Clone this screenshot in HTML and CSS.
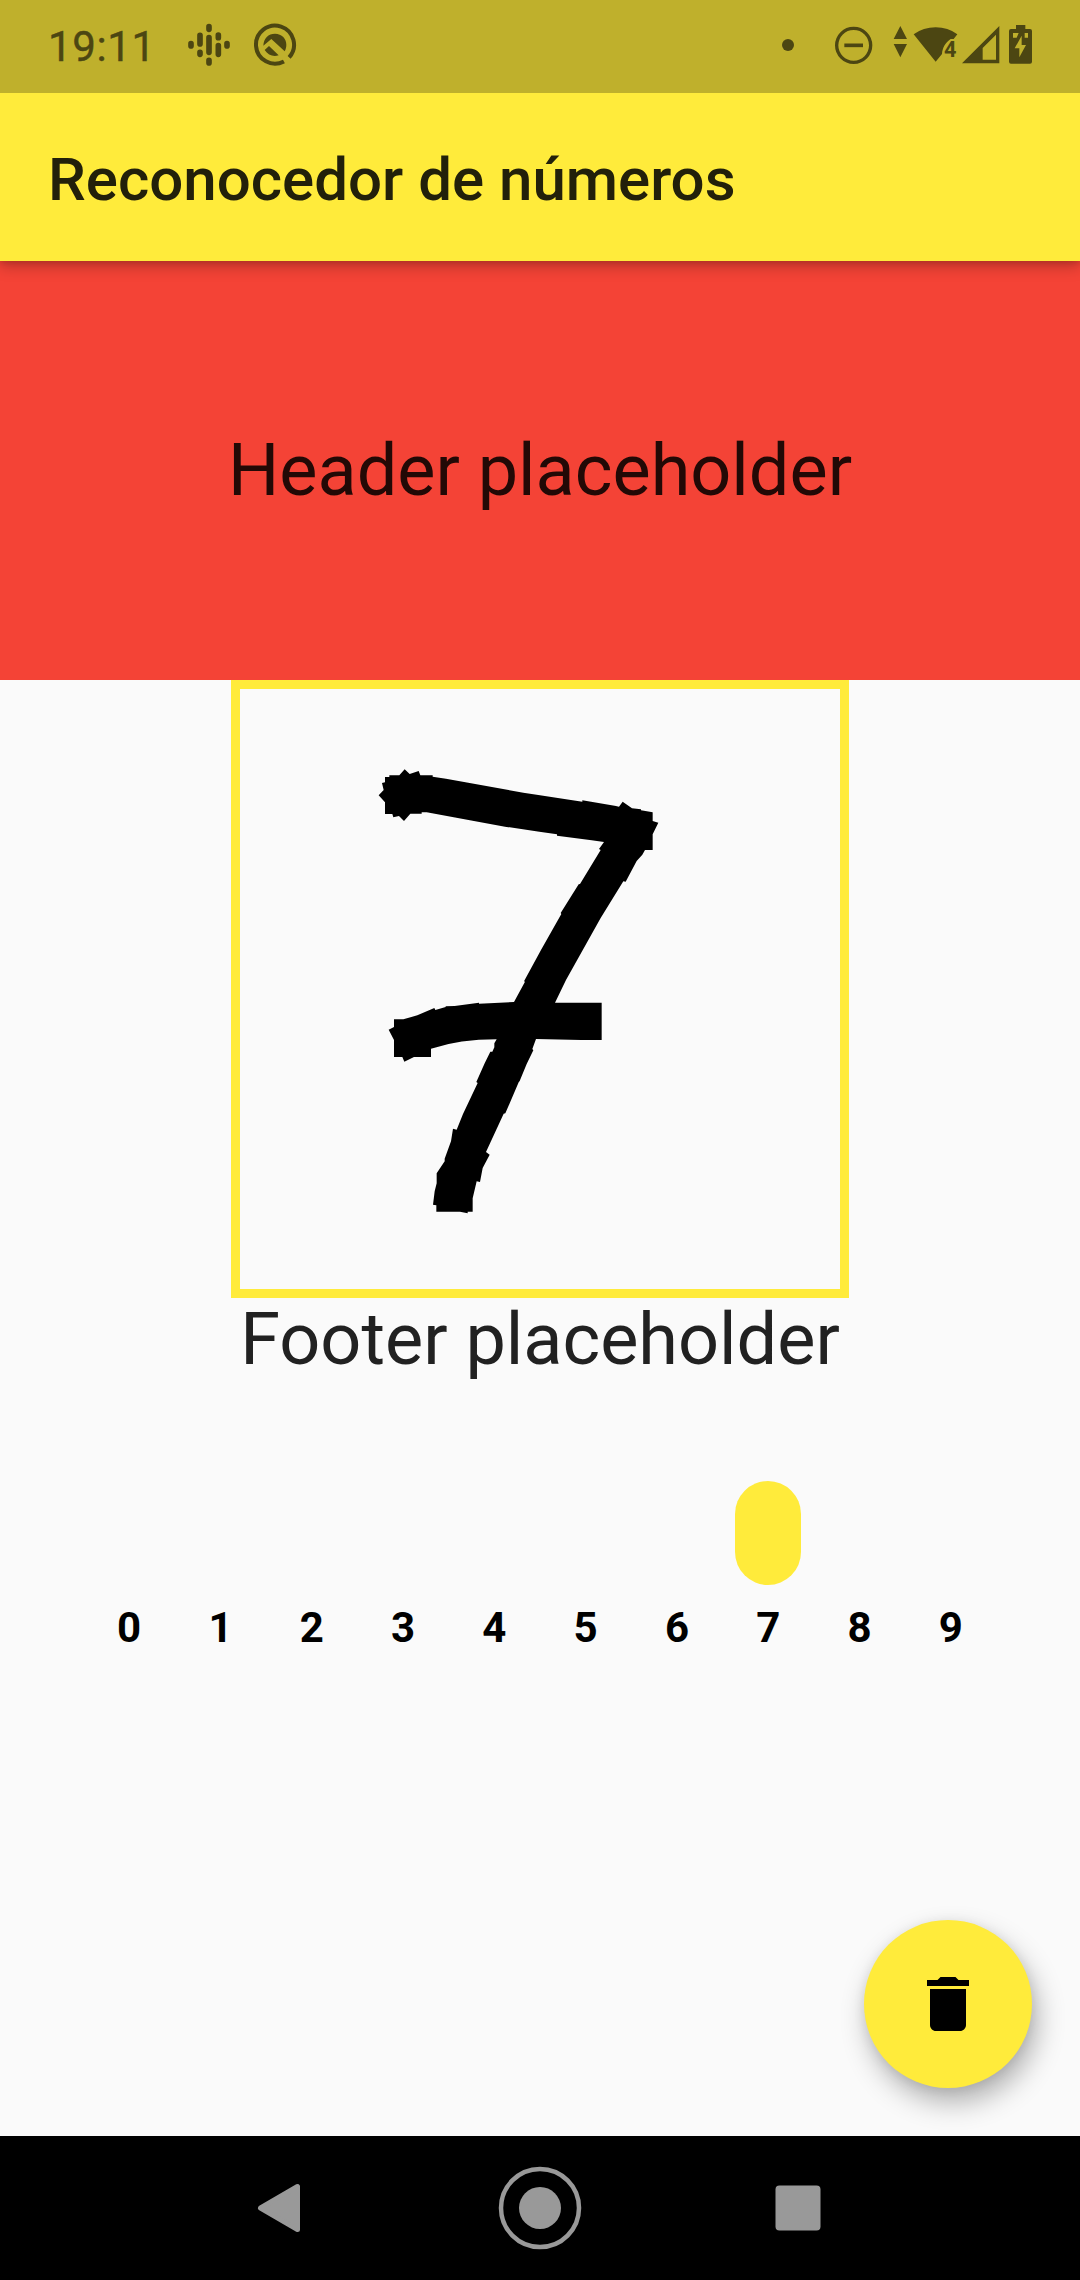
FILE: index.html
```html
<!DOCTYPE html>
<html lang="es">
<head>
<meta charset="utf-8">
<title>Reconocedor de números</title>
<link rel="stylesheet" href="styles.css">
</head>
<body>
<div class="screen">
  <div class="status-bar">
    <span class="clock">19:11</span>
    <svg class="podcasts" viewBox="561 0 132 279"><g stroke="currentColor" stroke-width="17" stroke-linecap="round"><path d="M573 131v7M600 106v26M600 157v6M627 80v8M627 113v44M627 181v8M655 105v8M655 137v26M681 131v7"/></g></svg>
    <svg class="android-q" viewBox="759 0 132 279"><path d="M851.800 184.300A57 57 0 1 1 867.400 172.100" fill="none" stroke="currentColor" stroke-width="12"/><path fill="currentColor" d="M790 137C791 115 805 101 825 101C846 101 859 116 859 134C859 142 857 148 854 154L814 117ZM794 150L807 138L836 166C820 171 804 166 794 150Z"/></svg>
    <span class="spacer"></span>
    <svg class="dot" viewBox="126 0 36 279"><circle cx="144" cy="135" r="18" fill="currentColor"/></svg>
    <svg class="dnd" viewBox="282 0 117 279"><circle cx="341" cy="136" r="51" fill="none" stroke="currentColor" stroke-width="10"/><path d="M313 136h56" stroke="currentColor" stroke-width="11"/></svg>
    <svg class="traffic" viewBox="459 0 45 279"><path fill="currentColor" d="M481 78l20 39h-40zM461 132h40l-20 40z"/></svg>
    <svg class="wifi" viewBox="519 0 135 279"><path fill="currentColor" d="M521 103Q550 82 587 82T652 103L641 117H632C616 128 607 144 606 162L587 185Z"/><text x="612" y="170" class="wifi-badge">4</text></svg>
    <svg class="signal" viewBox="666 0 114 279"><path fill="currentColor" fill-rule="evenodd" d="M666 190L778 78V190ZM728 179H768V104L728 144Z"/></svg>
    <svg class="battery" viewBox="804 0 75 279"><path fill="currentColor" fill-rule="evenodd" d="M828 75h28v12h14q6 0 6 6v92q0 6-6 6H813q-6 0-6-6V93q0-6 6-6h15ZM819 99V113H830L836 99ZM854 99V113H864V99ZM845 107L824 145H838V172L858 135H845Z"/></svg>
  </div>
  <header class="app-bar"><h1 class="title">Reconocedor de números</h1></header>
  <main class="content">
    <section class="header-panel">Header placeholder</section>
    <div class="canvas">
      <svg class="drawing" viewBox="240 689 600 600">
        <g transform="translate(350 740) scale(.333333)">
          <path d="M105 111H118V106H148L164 88L179 102L206 93L211 106H248V110L288 116L520 158L565 165L697 185V181L798 198L807 200L818 185L846 205L873 208V211L908 217V243L925 248L908 283V330H885L877 344L860 363L827 425L820 424L752 534L648 720L615 788H755V900H693L558 897L547 927L550 931L530 972L509 1023L506 1027L466 1120L461 1121L408 1236L419 1244L398 1284L390 1326L380 1324L368 1375V1415H353V1420L330 1415H259V1396L249 1394L254 1354L260 1330V1300L284 1264V1256L303 1204L309 1166L320 1169L339 1122L383 1029L379 1026L404 970L421 935L427 935L433 922V910L440 898Q330 898 243 926V951H192L163 965L157 951H132V900L116 869L132 861V838H160L202 826L253 804L256 810L287 801V799L314 798L387 788V791L492 786L525 725L522 724L573 630L634 522L632 519L686 433L690 432L752 330L747 327L762 306L725 301L621 287V283L568 275L465 260L230 217H215V221H181L162 243L147 228L130 232L127 222H105V187L86 166L101 150L96 129L105 127Z"/>
        </g>
      </svg>
    </div>
    <div class="footer-text">Footer placeholder</div>
    <div class="chart">
      <div class="column"><i class="bar"></i><span>0</span></div>
      <div class="column"><i class="bar"></i><span>1</span></div>
      <div class="column"><i class="bar"></i><span>2</span></div>
      <div class="column"><i class="bar"></i><span>3</span></div>
      <div class="column"><i class="bar"></i><span>4</span></div>
      <div class="column"><i class="bar"></i><span>5</span></div>
      <div class="column"><i class="bar"></i><span>6</span></div>
      <div class="column"><i class="bar" style="height:104px"></i><span>7</span></div>
      <div class="column"><i class="bar"></i><span>8</span></div>
      <div class="column"><i class="bar"></i><span>9</span></div>
    </div>
    <button class="fab" aria-label="Borrar"><svg class="trash" viewBox="0 0 24 24"><path d="M6 19c0 1.100.9 2 2 2h8c1.100 0 2-.9 2-2V7H6v12zM19 4h-3.500l-1-1h-5l-1 1H5v2h14V4z"/></svg></button>
  </main>
  <nav class="nav-bar">
    <svg class="nav-icon" viewBox="0 0 84 84"><path d="M20.500 42L57.500 20.500V63.500Z" fill="currentColor" stroke="currentColor" stroke-width="5" stroke-linejoin="round"/></svg>
    <svg class="nav-icon" viewBox="0 0 84 84"><circle cx="42" cy="42" r="39" fill="none" stroke="currentColor" stroke-width="4.500"/><circle cx="42" cy="42" r="21" fill="currentColor"/></svg>
    <svg class="nav-icon" viewBox="0 0 84 84"><rect x="19.500" y="19.500" width="45" height="45" rx="4" fill="currentColor"/></svg>
  </nav>
</div>
</body>
</html>
```
FILE: styles.css
```css
* { box-sizing: border-box; }
body { margin: 0; font-family: Roboto, "Noto Sans", sans-serif; }
.screen { width: 1080px; height: 2280px; display: flex; flex-direction: column; background: #fafafa; overflow: hidden; }

.status-bar { flex: none; height: 93px; display: flex; align-items: center; padding: 0 47px 0 48px; background: #bfb02c; color: #4c4612; position: relative; z-index: 2; }
.status-bar svg { height: 93px; flex: none; display: block; }
.clock { width: 139px; font-size: 42px; line-height: 50px; font-weight: 400; letter-spacing: 0.6px; -webkit-text-stroke: 0.4px currentColor; }
.spacer { flex: 1; }
.podcasts { width: 44px; margin-right: 22px; }
.android-q { width: 44px; }
.dot { width: 12px; margin-right: 40px; }
.dnd { width: 39px; margin-right: 20px; }
.traffic { width: 15px; margin-right: 5px; }
.wifi { width: 45px; margin-right: 4px; }
.wifi-badge { font-size: 65px; font-weight: 700; fill: currentColor; }
.signal { width: 38px; margin-right: 8px; }
.battery { width: 25px; }

.app-bar { flex: none; height: 168px; display: flex; align-items: center; padding: 6px 48px 0; background: #ffeb3b; position: relative; z-index: 1; box-shadow: 0 6px 14px rgba(0, 0, 0, .22), 0 2px 6px rgba(0, 0, 0, .12); }
.title { margin: 0; font-size: 60px; line-height: 70px; font-weight: 500; color: #22200a; white-space: nowrap; }

.content { flex: 1; min-height: 0; position: relative; display: flex; flex-direction: column; align-items: center; }
.header-panel { width: 100%; height: 419px; display: flex; align-items: center; justify-content: center; background: #f44336; color: #220906; font-size: 72px; line-height: 84px; }
.canvas { width: 618px; height: 618px; border: 9px solid #ffeb3b; }
.drawing { display: block; width: 600px; height: 600px; }
.footer-text { font-size: 72px; line-height: 84px; color: #212121; }

.chart { width: 913px; height: 270px; display: flex; align-items: flex-end; }
.column { flex: 1; display: flex; flex-direction: column; align-items: center; gap: 18px; font-size: 42px; line-height: 49px; font-weight: 700; color: #000; }
.bar { width: 66px; height: 0; border-radius: 33px; background: #ffeb3b; }

.fab { position: absolute; right: 48px; bottom: 48px; width: 168px; height: 168px; padding: 0; border: 0; border-radius: 50%; background: #ffeb3b; display: flex; align-items: center; justify-content: center; box-shadow: 5px 14px 28px rgba(0, 0, 0, .3), 0 2px 12px rgba(0, 0, 0, .08); }
.trash { width: 72px; height: 72px; }

.nav-bar { flex: none; height: 144px; display: flex; align-items: center; justify-content: center; gap: 174px; background: #000; color: #999; }
.nav-icon { width: 84px; height: 84px; }
```
